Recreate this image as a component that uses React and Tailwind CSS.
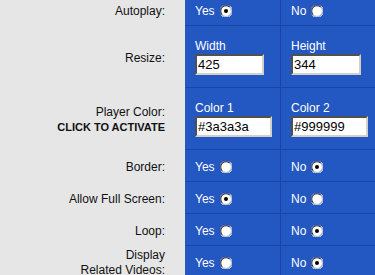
const font = { fontFamily: '"Liberation Sans", Arial, sans-serif' };

function Radio({ checked }) {
  return (
    <svg width="12" height="12" viewBox="0 0 12 12" className="ml-[5px] shrink-0">
      <circle cx="6" cy="6" r="5.5" fill="#ffffff" />
      <path d="M1.5 10.5 A5.5 5.5 0 0 1 10.5 1.5" fill="none" stroke="#808080" strokeWidth="1" />
      <path d="M2.3 9.7 A4.5 4.5 0 0 1 9.7 2.3" fill="none" stroke="#404040" strokeWidth="1" />
      <path d="M10.5 1.5 A5.5 5.5 0 0 1 1.5 10.5" fill="none" stroke="#f0f0f0" strokeWidth="1" />
      <path d="M9.7 2.3 A4.5 4.5 0 0 1 2.3 9.7" fill="none" stroke="#d4d0c8" strokeWidth="1" />
      {checked && <circle cx="6" cy="6" r="2" fill="#000000" />}
    </svg>
  );
}

function TextBox({ value, width }) {
  return (
    <input
      type="text"
      defaultValue={value}
      className={`${width} h-[21px] bg-white border-2 border-t-[#505050] border-l-[#505050] border-b-[#d4d0c8] border-r-[#d4d0c8] px-[1px] text-[13px] text-black outline-none`}
      style={font}
    />
  );
}

function Label({ children }) {
  return (
    <div className="w-[185px] shrink-0 flex flex-col items-end justify-center pr-[20px] pt-[2px] text-right text-[12px] leading-[15px] text-[#111]">
      {children}
    </div>
  );
}

function Cells({ height, left, right }) {
  return (
    <div className="flex-1 grid grid-cols-[95px_94px] gap-x-px bg-[#1a45a6] border-b border-[#1a45a6]">
      <div className={`${height} bg-[#2357c1] pl-[10px] flex flex-col justify-center text-white text-[12px]`}>{left}</div>
      <div className={`${height} bg-[#2357c1] pl-[10px] flex flex-col justify-center text-white text-[12px]`}>{right}</div>
    </div>
  );
}

function YesNo({ value }) {
  return (
    <Cells
      height="h-[31px]"
      left={<div className="flex items-center pt-[2px]">Yes<Radio checked={value} /></div>}
      right={<div className="flex items-center pt-[2px]">No<Radio checked={!value} /></div>}
    />
  );
}

function Field({ label, value, width }) {
  return (
    <div className="flex flex-col gap-px">
      <span className="leading-[14px]">{label}</span>
      <TextBox value={value} width={width} />
    </div>
  );
}

export default function App() {
  const rows = [
    ["Border", false],
    ["Allow Full Screen", true],
    ["Loop", false],
  ];

  return (
    <div className="w-[375px] h-[275px] overflow-hidden bg-[#e6e6e6]" style={font}>
      <div className="-mt-[6px]">
        <div className="flex">
          <Label>Autoplay:</Label>
          <YesNo value={true} />
        </div>

        <div className="flex">
          <Label>Resize:</Label>
          <Cells
            height="h-[61px]"
            left={<Field label="Width" value="425" width="w-[69px]" />}
            right={<Field label="Height" value="344" width="w-[70px]" />}
          />
        </div>

        <div className="flex">
          <Label>
            <span>Player Color:</span>
            <span className="font-bold text-[11px]">CLICK TO ACTIVATE</span>
          </Label>
          <Cells
            height="h-[61px]"
            left={<Field label="Color 1" value="#3a3a3a" width="w-[77px]" />}
            right={<Field label="Color 2" value="#999999" width="w-[77px]" />}
          />
        </div>

        {rows.map(([name, on]) => (
          <div className="flex" key={name}>
            <Label>{name}:</Label>
            <YesNo value={on} />
          </div>
        ))}

        <div className="flex">
          <Label>
            <span>Display</span>
            <span>Related Videos:</span>
          </Label>
          <YesNo value={false} />
        </div>
      </div>
    </div>
  );
}
